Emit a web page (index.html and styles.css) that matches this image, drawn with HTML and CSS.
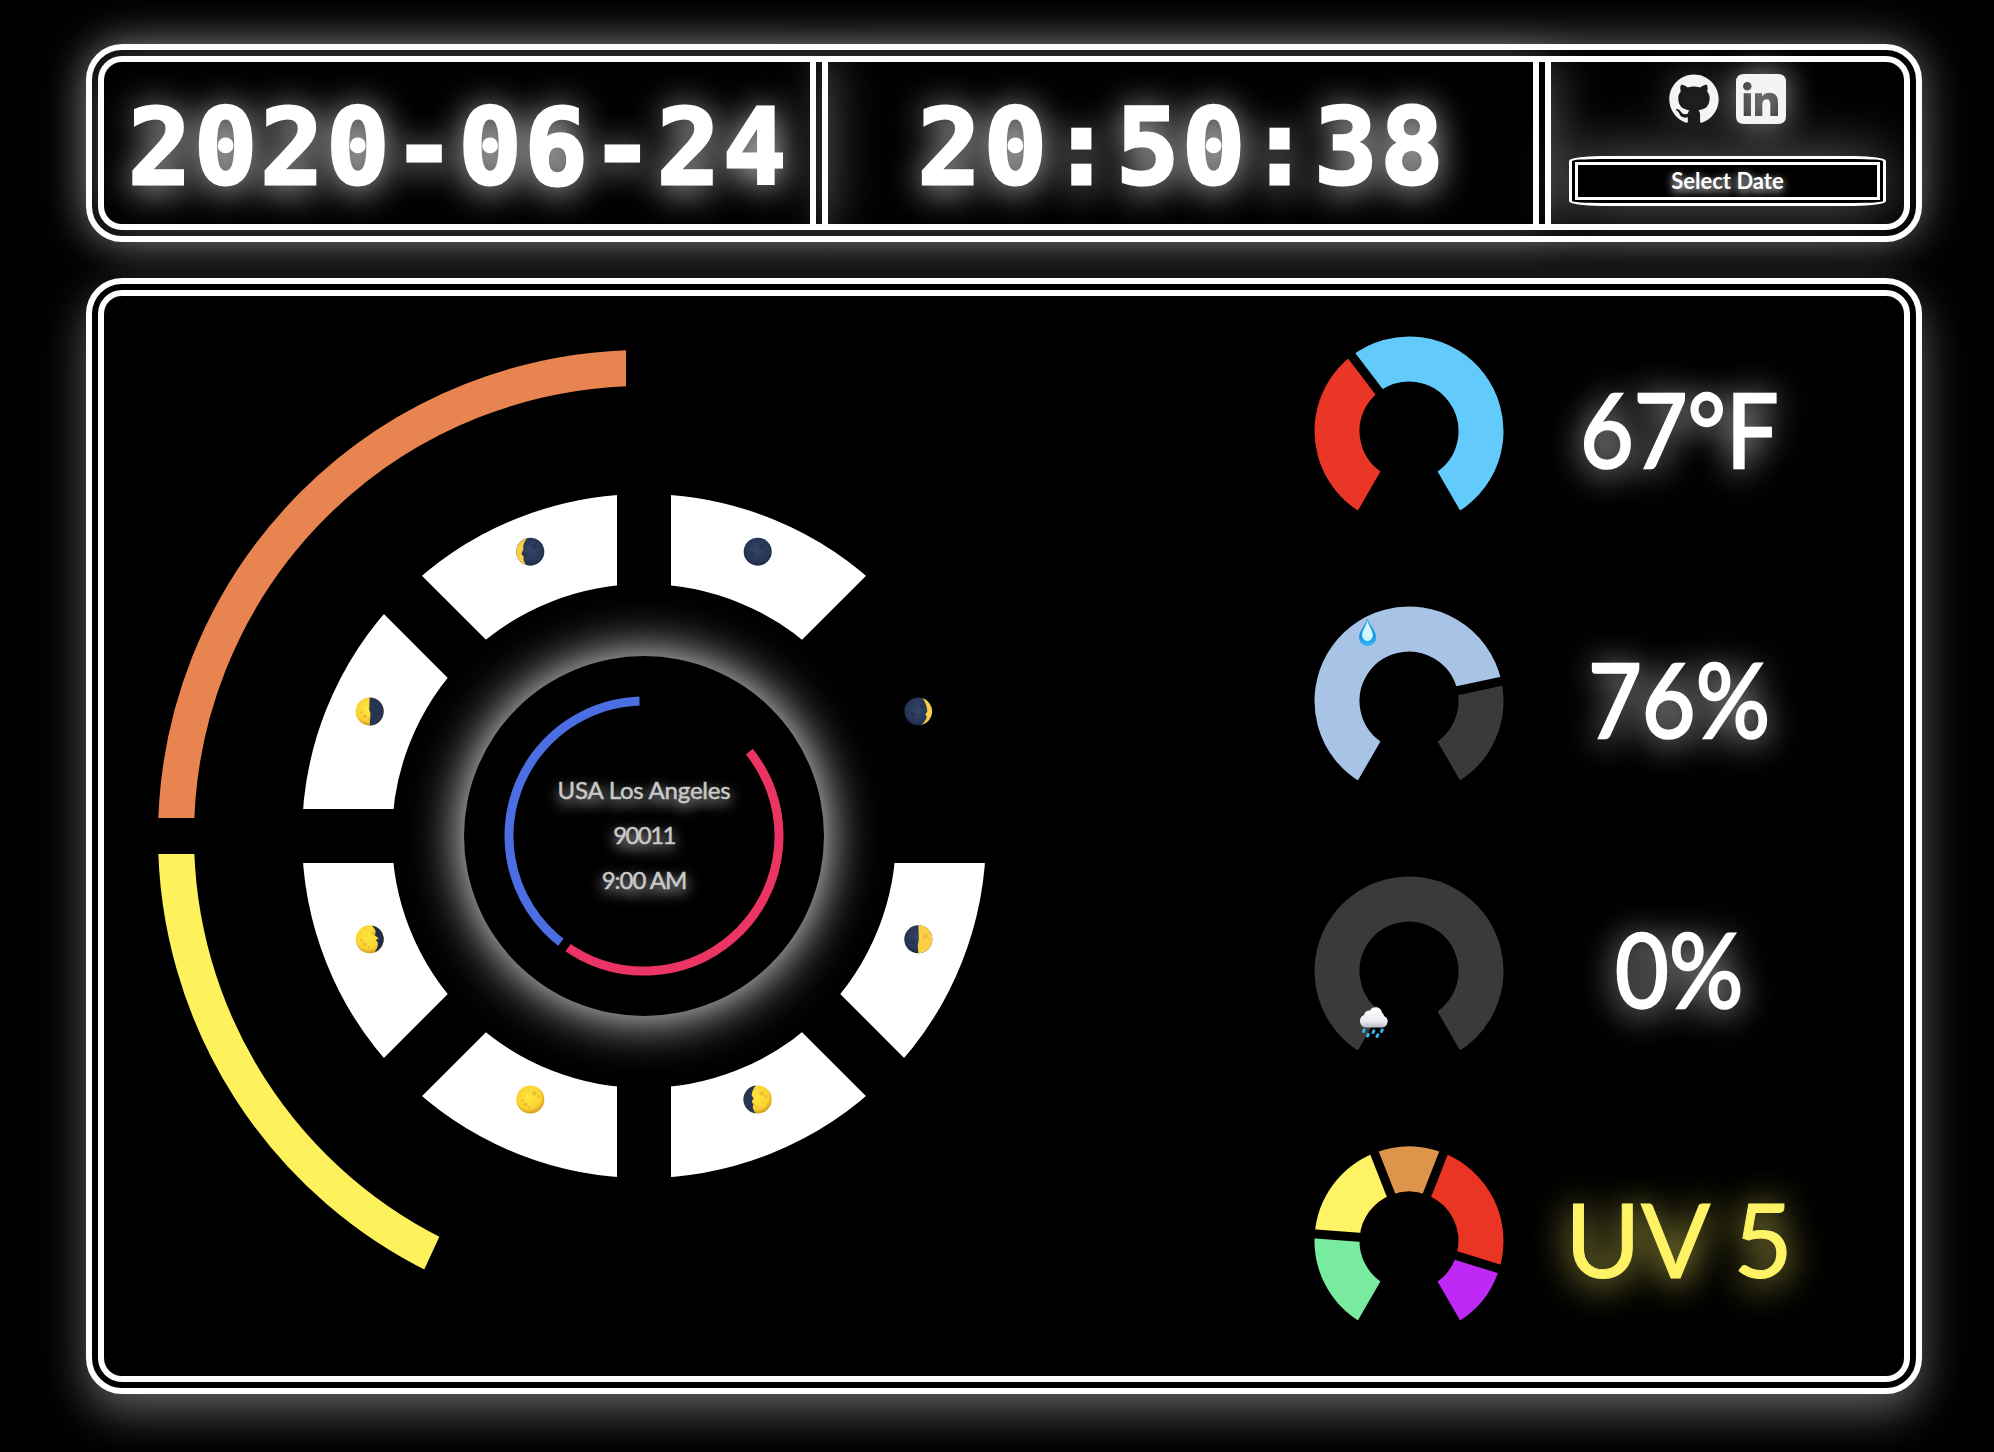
FILE: index.html
```html
<!DOCTYPE html>
<html lang="en">
<head>
<meta charset="utf-8">
<title>Weather Clock</title>
<link rel="stylesheet" href="styles.css">
</head>
<body>
<header class="panel topbar">
  <div class="cell lit digits">2020-06-24</div>
  <div class="cell lit digits">20:50:38</div>
  <div class="cell links">
    <div class="icons">
      <a class="icon icon-soft"><svg viewBox="0 0 24 24.3" width="50" height="50"><path fill="#f4f4f4" d="M12 .297c-6.63 0-12 5.373-12 12 0 5.303 3.438 9.8 8.205 11.385.6.113.82-.258.82-.577 0-.285-.01-1.04-.015-2.04-3.338.724-4.042-1.61-4.042-1.61C4.422 18.07 3.633 17.7 3.633 17.7c-1.087-.744.084-.729.084-.729 1.205.084 1.838 1.236 1.838 1.236 1.07 1.835 2.809 1.305 3.495.998.108-.776.417-1.305.76-1.605-2.665-.3-5.466-1.332-5.466-5.93 0-1.31.465-2.38 1.235-3.22-.135-.303-.54-1.523.105-3.176 0 0 1.005-.322 3.3 1.23.96-.267 1.98-.399 3-.405 1.02.006 2.04.138 3 .405 2.28-1.552 3.285-1.23 3.285-1.23.645 1.653.24 2.873.12 3.176.765.84 1.23 1.91 1.23 3.22 0 4.61-2.805 5.625-5.475 5.92.42.36.81 1.096.81 2.22 0 1.606-.015 2.896-.015 3.286 0 .315.21.69.825.57C20.565 22.092 24 17.592 24 12.297c0-6.627-5.373-12-12-12"/></svg></a>
      <a class="icon icon-glow"><svg viewBox="0 0 50 50" width="50" height="50"><path fill="#f4f4f4" fill-rule="evenodd" d="M8 0H42Q50 0 50 8V42Q50 50 42 50H8Q0 50 0 42V8Q0 0 8 0ZM11.300 8A4.300 4.300 0 1 0 11.300 16.600 4.300 4.300 0 1 0 11.300 8ZM7.700 19.300H15V42H7.700ZM19 19.300H26V22.500C27.500 20 30 18.700 33.500 18.700 39.500 18.700 42 22.500 42 28.500V42H34.300V30.500C34.300 27.300 33.300 25.300 30.500 25.300 27.600 25.300 26.300 27.400 26.300 30.400V42H19Z"/></svg></a>
    </div>
    <button class="select-date">Select Date</button>
  </div>
</header>

<main class="panel board">
  <section class="dial">
    <svg class="dial-svg" viewBox="-540 -540 1080 1080" width="1080" height="1080">
      <defs>
        <radialGradient id="gold" cx=".45" cy=".4" r=".62"><stop offset="0" stop-color="#ffe53c"/><stop offset=".7" stop-color="#fbd334"/><stop offset="1" stop-color="#cf9416"/></radialGradient>
        <radialGradient id="navy" cx=".5" cy=".45" r=".6"><stop offset="0" stop-color="#33456a"/><stop offset=".75" stop-color="#263552"/><stop offset="1" stop-color="#131b2e"/></radialGradient>
        <g id="gold-disc"><circle r="14" fill="url(#gold)"/><g fill="#d9a32a" opacity=".45"><circle cx="-5" cy="5" r="2"/><circle cx="-8" cy="1" r="1.500"/><circle cx="4" cy="-6" r="2.200"/><circle cx="8" cy="-3" r="1.500"/><circle cx="-1" cy="8" r="1.200"/></g></g>
        <g id="navy-disc"><circle r="14" fill="url(#navy)"/><g fill="#1d2942" opacity=".5"><circle cx="4" cy="-5" r="2.500"/><circle cx="-5" cy="3" r="2"/></g></g>
      </defs>
      <g class="ring" stroke-width="36">
        <circle r="468" pathLength="360" stroke="#e8844f" stroke-dasharray="90 360" transform="rotate(180)"/>
        <circle r="468" pathLength="360" stroke="#fdf25b" stroke-dasharray="65.240 360" transform="rotate(114.760)"/>
        <path class="gap" d="M0 0V-500M0 0H-500M0 0L-209.400 454"/>
      </g>
      <g class="ring">
        <circle r="297" pathLength="360" stroke="#fff" stroke-width="90" stroke-dasharray="315 360"/>
        <path class="gap" stroke-width="54" d="M0-380V380M-380 0H380M-270-270L270 270M-270 270L270-270"/>
      </g>
      <g transform="translate(113.700 -284.300)"><use href="#navy-disc"/></g>
      <g transform="translate(274.300 -124.500)"><use href="#navy-disc"/><path d="M4-13.400A14 14 0 0 1 3 13.600Q8 9 8.500 5L7 3 9 0Q8.500-8 4-13.400Z" fill="#fbcf45"/></g>
      <g transform="translate(274.300 103.300)"><use href="#navy-disc"/><path d="M0-14A14 14 0 0 1 0 14L-.5 6 .5 0Z" fill="#fbcf45"/><circle cx="7" cy="-3" r="2" fill="#d9a32a" opacity=".5"/></g>
      <g transform="translate(113.700 263.500)"><use href="#gold-disc"/><path d="M-2-13.900A14 14 0 0 0-2 13.900Q-6 9-4.500 5L-6 2-4-1-6-4Q-6-9-2-13.900Z" fill="#263552"/></g>
      <g transform="translate(-113.700 263.500)"><use href="#gold-disc"/></g>
      <g transform="translate(-274.300 103.300)"><use href="#gold-disc"/><path d="M2-13.900A14 14 0 0 1 5 13.100Q9 7 8 3L6 1 9-1 5-4 6-7Q6-10 2-13.900Z" fill="#1f2d49"/></g>
      <g transform="translate(-274.300 -124.500)"><use href="#gold-disc"/><path d="M0-14A14 14 0 0 1 0 14L.8 2-.5-2Z" fill="#263552"/></g>
      <g transform="translate(-113.700 -284.300)"><use href="#navy-disc"/><path d="M-3-13.700A14 14 0 0 0-4 13.400Q-8 8-6.500 5L-9 2-7-2Q-8-8-3-13.700Z" fill="#fbcf45"/></g>
    </svg>
    <div class="hub">
      <svg class="hub-ring" viewBox="-180 -180 360 360" width="360" height="360">
        <g class="ring" stroke-width="9">
          <circle r="135" pathLength="360" stroke="#4b6fe3" stroke-dasharray="143.900 360" transform="rotate(126.100)"/>
          <circle r="135" pathLength="360" stroke="#ec3464" stroke-dasharray="166.700 360" transform="rotate(-40.600)"/>
          <path class="gap" d="M0 0V-150M0 0L-88.400 121.200M0 0L113.900-97.600"/>
        </g>
      </svg>
      <div class="place">
        <span class="line-city">USA Los Angeles</span>
        <span class="line-zip">90011</span>
        <span class="line-hour">9:00 AM</span>
      </div>
    </div>
  </section>

  <section class="gauges">
    <div class="gauge">
      <svg viewBox="-135 -135 270 270" width="270" height="270">
        <g class="ring" stroke-width="45">
          <circle r="72" pathLength="360" stroke="#ea3626" stroke-dasharray="112.700 360" transform="rotate(-240)"/>
          <circle r="72" pathLength="360" stroke="#63cafc" stroke-dasharray="187.300 360" transform="rotate(-127.300)"/>
        </g>
        <g class="cuts"><path d="M0 0V-100" transform="rotate(-150)"/><path d="M0 0V-100" transform="rotate(-37.300)"/><path d="M0 0V-100" transform="rotate(150)"/></g>
      </svg>
      <div class="value"><span class="narrow">67°F</span></div>
    </div>
    <div class="gauge">
      <svg viewBox="-135 -135 270 270" width="270" height="270">
        <defs><linearGradient id="drop" x2="0" y2="1"><stop offset="0" stop-color="#2f9fe0"/><stop offset=".6" stop-color="#0c92e8"/><stop offset="1" stop-color="#38b8f4"/></linearGradient></defs>
        <g class="ring" stroke-width="45">
          <circle r="72" pathLength="360" stroke="#a7c3e5" stroke-dasharray="228 360" transform="rotate(-240)"/>
          <circle r="72" pathLength="360" stroke="#3a3a3a" stroke-dasharray="72 360" transform="rotate(-12)"/>
        </g>
        <g class="cuts"><path d="M0 0V-100" transform="rotate(-150)"/><path d="M0 0V-100" transform="rotate(78)"/><path d="M0 0V-100" transform="rotate(150)"/></g>
        <path fill="url(#drop)" d="M-41.500-83C-40-76-33-71-33-63.500A8.500 8.500 0 0 1-50-63.500C-50-71-43-76-41.500-83Z"/>
        <path fill="#d4f6ff" d="M-41.500-81C-41-76-36-71-36-65Q-38-60-41.500-60-45-60-47-65C-47-71-42-76-41.500-81Z"/>
      </svg>
      <div class="value"><span class="narrow">76%</span></div>
    </div>
    <div class="gauge">
      <svg viewBox="-135 -135 270 270" width="270" height="270">
        <defs><linearGradient id="cloud" x2="0" y2="1"><stop offset="0" stop-color="#fff"/><stop offset=".7" stop-color="#e9ebf0"/><stop offset="1" stop-color="#b9bdc8"/></linearGradient></defs>
        <g class="ring" stroke-width="45"><circle r="72" pathLength="360" stroke="#3a3a3a" stroke-dasharray="300 360" transform="rotate(-240)"/></g>
        <g class="cuts"><path d="M0 0V-100" transform="rotate(-150)"/><path d="M0 0V-100" transform="rotate(150)"/></g>
        <path fill="url(#cloud)" d="M-43 56.500A6.500 6.500 0 0 1-45 44 5.500 5.500 0 0 1-39 39.500 6.500 6.500 0 0 1-27 41.500 5 5 0 0 1-25 45 6 6 0 0 1-27.500 56.500Z"/>
        <path stroke="#35b6e8" stroke-width="3" stroke-linecap="round" d="M-45.500 60.500l.8-1.600M-36 61.500l.8-1.600M-27.500 60.500l.8-1.600M-41.500 65l.8-1.600M-32 65.500l.8-1.600"/>
      </svg>
      <div class="value"><span class="narrow">0%</span></div>
    </div>
    <div class="gauge">
      <svg viewBox="-135 -135 270 270" width="270" height="270">
        <g class="ring" stroke-width="45">
          <circle r="72" pathLength="360" stroke="#79eb9f" stroke-dasharray="64.290 360" transform="rotate(-240)"/>
          <circle r="72" pathLength="360" stroke="#fdf364" stroke-dasharray="64.290 360" transform="rotate(-175.710)"/>
          <circle r="72" pathLength="360" stroke="#dc954b" stroke-dasharray="42.860 360" transform="rotate(-111.430)"/>
          <circle r="72" pathLength="360" stroke="#ea3424" stroke-dasharray="85.710 360" transform="rotate(-68.570)"/>
          <circle r="72" pathLength="360" stroke="#bf29f5" stroke-dasharray="42.860 360" transform="rotate(17.140)"/>
        </g>
        <g class="cuts"><path d="M0 0V-100" transform="rotate(-150)"/><path d="M0 0V-100" transform="rotate(-85.710)"/><path d="M0 0V-100" transform="rotate(-21.430)"/><path d="M0 0V-100" transform="rotate(21.430)"/><path d="M0 0V-100" transform="rotate(107.140)"/><path d="M0 0V-100" transform="rotate(150)"/></g>
      </svg>
      <div class="value uv"><span>UV 5</span></div>
    </div>
  </section>
</main>
</body>
</html>
```
FILE: styles.css
```css
* { box-sizing: border-box; }
html, body { margin: 0; background: #000; color: #fff; }
body {
  height: 1452px;
  padding: 44px 72px 0 86px;
  display: flex;
  flex-direction: column;
  gap: 36px;
  overflow: hidden;
  font-family: Lato, "Liberation Sans", sans-serif;
}
.panel {
  border: 18px double #fff;
  border-radius: 36px;
  flex: none;
}
.topbar {
  height: 198px;
  display: grid;
  grid-template-columns: 724px 723px 353px;
  box-shadow: 0 0 45px rgba(255, 255, 255, .42);
}
.cell { display: flex; align-items: center; justify-content: center; }
.lit {
  border-right: 18px double #fff;
  box-shadow: 0 0 54px rgba(255, 255, 255, .36);
}
.lit:first-child { border-radius: 18px 0 0 18px; }
.digits {
  font: bold 105px/152px "DejaVu Sans Mono", monospace;
  letter-spacing: 2.900px;
  -webkit-text-stroke: 3px #fff;
  text-shadow: 0 4px 36px #fff;
  padding: 10px 0 0 3px;
}
.links { flex-direction: column; justify-content: flex-start; padding-top: 12px; }
.icons { display: flex; gap: 17px; height: 50px; }
.icon, .icon svg { display: block; }
.icon-soft svg { filter: drop-shadow(0 0 18px rgba(255, 255, 255, .4)); }
.icon-glow svg { filter: drop-shadow(0 0 16px rgba(255, 255, 255, .75)); }
.select-date {
  margin: 32px 0 0;
  width: 317px;
  height: 50px;
  padding: 0;
  border: 9px double #fff;
  border-radius: 10%;
  background: #000;
  color: #fff;
  font: bold 22px/32px Lato, "Liberation Sans", sans-serif;
  text-shadow: 0 3px 9px #fff;
  box-shadow: 0 0 60px rgba(255, 255, 255, .4);
}
.board {
  height: 1116px;
  background: #000;
  display: grid;
  grid-template-columns: 1080px 720px;
  box-shadow: 0 18px 45px rgba(255, 255, 255, .37);
}
.dial { display: grid; place-items: center; }
.dial > * { grid-area: 1 / 1; }
.ring { fill: none; }
.gap, .cuts { stroke: #000; fill: none; }
.cuts { stroke-width: 9px; }
.hub {
  display: grid;
  place-items: center;
  width: 360px;
  height: 360px;
  border-radius: 50%;
  background: #000;
  box-shadow: 0 0 54px #fff;
}
.hub > * { grid-area: 1 / 1; }
.place {
  display: flex;
  flex-direction: column;
  align-items: center;
  padding-bottom: 3px;
  font-size: 24px;
  line-height: 45px;
  color: #c9c9c9;
  -webkit-text-stroke: .5px #c9c9c9;
  text-shadow: 0 5px 14px #fff;
}
.line-city { letter-spacing: -.2px; }
.line-zip { letter-spacing: -1.600px; }
.line-hour { letter-spacing: -1px; }
.gauges { display: grid; grid-template-rows: repeat(4, 270px); justify-content: center; }
.gauge { display: grid; grid-template-columns: 270px 270px; }
.gauge svg { display: block; }
.value {
  display: flex;
  align-items: center;
  justify-content: center;
  padding-bottom: 7px;
  font-size: 103px;
  white-space: nowrap;
  -webkit-text-stroke: 2.500px #fff;
  text-shadow: 0 4px 36px #fff;
}
.narrow { transform: scaleX(.9); }
.uv { color: #fdf364; -webkit-text-stroke: 1px #fdf364; text-shadow: 0 4px 36px #fdf364; }
```
